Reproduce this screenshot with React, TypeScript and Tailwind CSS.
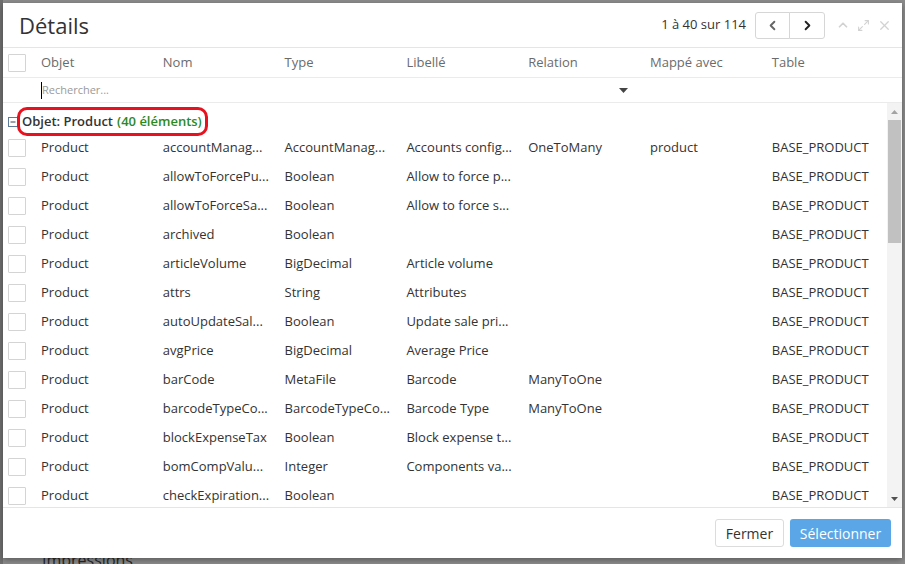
import React from "react";
import { ChevronLeft, ChevronRight, ChevronUp, Maximize2, X } from "lucide-react";

//types
type Row = {
  objet: string;
  nom: string;
  type: string;
  libelle: string;
  relation: string;
  mappe: string;
  table: string;
};

const columns = ["Objet", "Nom", "Type", "Libellé", "Relation", "Mappé avec", "Table"];

const rows: Row[] = [
  { objet: "Product", nom: "accountManag...", type: "AccountManag...", libelle: "Accounts config...", relation: "OneToMany", mappe: "product", table: "BASE_PRODUCT" },
  { objet: "Product", nom: "allowToForcePu...", type: "Boolean", libelle: "Allow to force p...", relation: "", mappe: "", table: "BASE_PRODUCT" },
  { objet: "Product", nom: "allowToForceSa...", type: "Boolean", libelle: "Allow to force s...", relation: "", mappe: "", table: "BASE_PRODUCT" },
  { objet: "Product", nom: "archived", type: "Boolean", libelle: "", relation: "", mappe: "", table: "BASE_PRODUCT" },
  { objet: "Product", nom: "articleVolume", type: "BigDecimal", libelle: "Article volume", relation: "", mappe: "", table: "BASE_PRODUCT" },
  { objet: "Product", nom: "attrs", type: "String", libelle: "Attributes", relation: "", mappe: "", table: "BASE_PRODUCT" },
  { objet: "Product", nom: "autoUpdateSal...", type: "Boolean", libelle: "Update sale pri...", relation: "", mappe: "", table: "BASE_PRODUCT" },
  { objet: "Product", nom: "avgPrice", type: "BigDecimal", libelle: "Average Price", relation: "", mappe: "", table: "BASE_PRODUCT" },
  { objet: "Product", nom: "barCode", type: "MetaFile", libelle: "Barcode", relation: "ManyToOne", mappe: "", table: "BASE_PRODUCT" },
  { objet: "Product", nom: "barcodeTypeCo...", type: "BarcodeTypeCo...", libelle: "Barcode Type", relation: "ManyToOne", mappe: "", table: "BASE_PRODUCT" },
  { objet: "Product", nom: "blockExpenseTax", type: "Boolean", libelle: "Block expense t...", relation: "", mappe: "", table: "BASE_PRODUCT" },
  { objet: "Product", nom: "bomCompValu...", type: "Integer", libelle: "Components va...", relation: "", mappe: "", table: "BASE_PRODUCT" },
  { objet: "Product", nom: "checkExpiration...", type: "Boolean", libelle: "", relation: "", mappe: "", table: "BASE_PRODUCT" },
];

const Checkbox = () => (
  <div className="w-[18px] h-[18px] border border-[#d4d4d4] bg-white rounded-[1px]" />
);

const Cell = ({ children }: { children?: React.ReactNode }) => (
  <div className="w-[121.8px] shrink-0 pl-[8px] pr-[6px] whitespace-nowrap overflow-hidden">{children}</div>
);

const Caret = () => (
  <svg width="9" height="5" viewBox="0 0 9 5">
    <path d="M0 0 L9 0 L4.5 5 Z" fill="#444" />
  </svg>
);

export default function App() {
  return (
    <div className="relative w-[905px] h-[564px] overflow-hidden bg-[#8b8b8b] font-['Open_Sans',sans-serif]">
      {/* page behind the dialog */}
      <div className="w-[3px] h-full bg-[#6f6f6f]" />
      <div className="absolute left-[42px] top-[552px] text-[16px] leading-none text-[#262626]">Impressions</div>

      {/* dialog */}
      <div className="absolute left-[3px] top-[3px] w-[899px] h-[555px] bg-white flex flex-col shadow-[0_2px_6px_rgba(0,0,0,0.35)]">
        {/* header */}
        <div className="h-[45px] shrink-0 border-b border-[#e5e5e5] flex items-center pl-[16px] pr-[10px]">
          <div className="text-[22px] text-[#333] leading-none">Détails</div>
          <div className="ml-auto flex items-center">
            <span className="text-[13px] text-[#333] mr-[9px]">1 à 40 sur 114</span>
            <div className="flex mr-[11px]">
              <button className="w-[35px] h-[27px] flex items-center justify-center border border-[#d6d6d6] rounded-l-[3px] bg-white text-[#666]">
                <ChevronLeft size={15} strokeWidth={3} />
              </button>
              <button className="w-[36px] h-[27px] -ml-px flex items-center justify-center border border-[#d6d6d6] rounded-r-[3px] bg-white text-[#222]">
                <ChevronRight size={15} strokeWidth={3} />
              </button>
            </div>
            <div className="flex items-center gap-[7px] text-[#d2d2d2]">
              <ChevronUp size={14} strokeWidth={3} />
              <Maximize2 size={13} strokeWidth={2} />
              <X size={15} strokeWidth={2} />
            </div>
          </div>
        </div>

        {/* column header */}
        <div className="h-[30px] shrink-0 border-b border-[#ebebeb] flex items-center pt-[1px] text-[13px] text-[#6b6b6b]">
          <div className="w-[30px] shrink-0 pl-[5px]">
            <Checkbox />
          </div>
          {columns.map((c) => (
            <Cell key={c}>{c}</Cell>
          ))}
        </div>

        {/* search row */}
        <div className="h-[25px] shrink-0 border-b border-[#ebebeb] flex items-center pt-[1px]">
          <div className="w-[30px] shrink-0" />
          <div className="w-[600px] pl-[8px] flex items-center">
            <div className="w-px h-[17px] bg-black" />
            <span className="text-[11px] text-[#9a9a9a]">Rechercher...</span>
            <div className="ml-auto mr-[5px] flex items-center">
              <Caret />
            </div>
          </div>
        </div>

        {/* body */}
        <div className="h-[404px] shrink-0 flex overflow-hidden">
          <div className="flex-1 text-[13px] text-[#333]">
            <div className="h-[30px] flex items-start pl-[5px] pt-[4px]">
              <svg width="10" height="10" viewBox="0 0 10 10" className="mt-[10px]">
                <rect x="0.5" y="0.5" width="9" height="9" fill="white" stroke="#5d7b99" />
                <path d="M2.5 5 H7.5" stroke="#34495e" strokeWidth="1" />
              </svg>
              <div className="h-[29px] flex items-center border-[3px] border-[#e8121f] rounded-[10px] pl-[2px] pr-[3px] -ml-[1px] font-semibold whitespace-nowrap">
                <span className="text-[#333]">Objet: Product</span>
                <span className="text-[#2b8a1e] ml-[4px]">(40 éléments)</span>
              </div>
            </div>
            {rows.map((r, index) => (
              <div key={index} className="h-[29px] flex items-center">
                <div className="w-[30px] shrink-0 pl-[5px]">
                  <Checkbox />
                </div>
                <Cell>{r.objet}</Cell>
                <Cell>{r.nom}</Cell>
                <Cell>{r.type}</Cell>
                <Cell>{r.libelle}</Cell>
                <Cell>{r.relation}</Cell>
                <Cell>{r.mappe}</Cell>
                <Cell>{r.table}</Cell>
              </div>
            ))}
          </div>

          {/* scrollbar */}
          <div className="w-[15px] shrink-0 bg-[#f3f3f3] flex flex-col items-center">
            <div className="h-[17px] flex items-center justify-center">
              <svg width="7" height="4" viewBox="0 0 7 4">
                <path d="M0 4 L3.5 0 L7 4 Z" fill="#a3a3a3" />
              </svg>
            </div>
            <div className="w-[13px] h-[123px] bg-[#c1c1c1]" />
            <div className="flex-1" />
            <div className="h-[17px] flex items-center justify-center">
              <svg width="7" height="4" viewBox="0 0 7 4">
                <path d="M0 0 L3.5 4 L7 0 Z" fill="#505050" />
              </svg>
            </div>
          </div>
        </div>

        {/* footer */}
        <div className="h-[51px] shrink-0 border-t border-[#e5e5e5] flex items-center justify-end gap-[6px] pr-[11px]">
          <button className="w-[69px] h-[28px] border border-[#dcdcdc] rounded-[3px] bg-white text-[14px] text-[#333]">
            Fermer
          </button>
          <button className="w-[101px] h-[28px] rounded-[3px] bg-[#5aa6e6] text-[14px] text-white">
            Sélectionner
          </button>
        </div>
      </div>
    </div>
  );
}
